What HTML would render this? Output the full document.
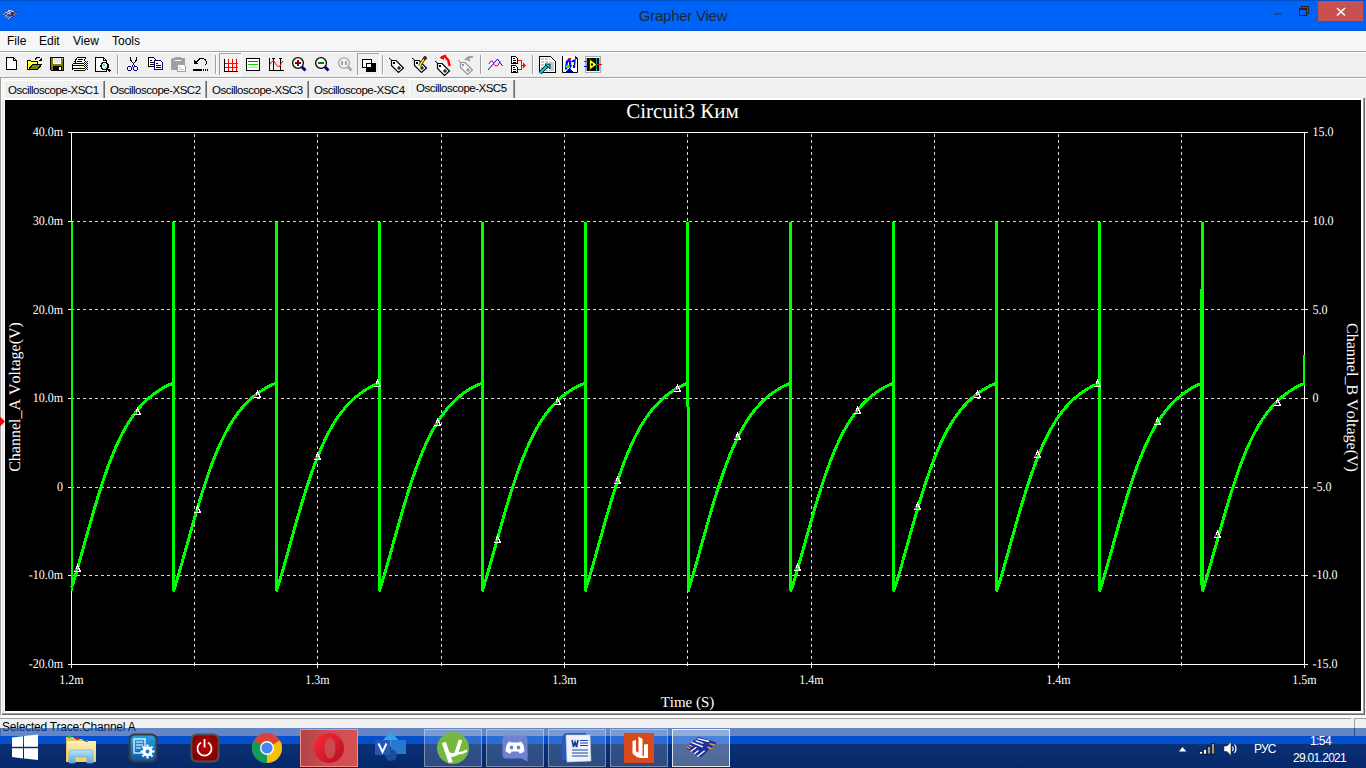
<!DOCTYPE html>
<html><head><meta charset="utf-8">
<style>
html,body{margin:0;padding:0;width:1366px;height:768px;overflow:hidden;background:#f0f0f0;font-family:"Liberation Sans",sans-serif;}
.abs{position:absolute;}
#titlebar{left:0;top:0;width:1366px;height:31px;background:#0063f8;border-top:1px solid #0050c8;box-sizing:border-box;}
#tb-bottom{left:0;top:30px;width:1366px;height:1px;background:#0056de;}
#title{left:0;top:7px;width:1366px;text-align:center;font-size:15px;letter-spacing:-0.25px;color:#1e2830;line-height:17px;}
#menubar{left:0;top:31px;width:1366px;height:20px;background:#f5f6f7;}
.menu{position:absolute;top:3px;font-size:12px;color:#000;line-height:15px;}
#tool-top{left:0;top:51px;width:1366px;height:1px;background:#a0a0a0;}
#tool-top2{left:0;top:52px;width:1366px;height:1px;background:#fff;}
#toolbar{left:0;top:53px;width:1366px;height:24px;background:#f0f0f0;}
#tool-bot{left:0;top:77px;width:1366px;height:1px;background:#a0a0a0;}
#tool-bot2{left:0;top:78px;width:1366px;height:1px;background:#fff;}
.sep{position:absolute;top:55px;width:1px;height:19px;background:#a0a0a0;border-right:1px solid #fff;}
.tab{position:absolute;font-size:11.5px;letter-spacing:-0.5px;color:#000;line-height:14px;}
.tsep{position:absolute;top:81px;width:1px;height:17px;background:#696969;border-left:1px solid #a0a0a0;}
#chart{left:5px;top:100px;width:1356px;height:611px;background:#000;}
.tbtn{position:absolute;top:729px;width:56px;height:37px;border:1px solid rgba(255,255,255,0.45);background:rgba(255,255,255,0.12);}
.tray{position:absolute;color:#fff;font-size:12px;line-height:14px;}
</style></head><body>
<!-- title bar -->
<div id="titlebar" class="abs"></div>
<div id="tb-bottom" class="abs"></div>
<svg class="abs" style="left:0;top:0" width="24" height="26" viewBox="0 0 24 26"><g transform="translate(-340.55,-359.2) scale(0.5)">
<path d="M685.1,747.6 L698.4,737.1 L716.7,742.5 L700.7,757.4 Z" fill="#1a2a90"/>
<path d="M697.5,738.6 L709,741.5 M695.6,740.7 L703.4,743.5 M691.5,742.4 L702.8,746.9 M690.6,751.5 L696.4,747.2 M694.2,753.7 L698.5,750.6 M697.4,756.4 L704.6,750.8" stroke="#f0f4ff" stroke-width="2"/>
<path d="M688.6,745 L692.5,746.6 M686.3,746.5 L690,748.7 M709.5,743.6 L714.5,745 M707.5,747 L711.5,748.8" stroke="#f8a818" stroke-width="2"/>
</g></svg>
<div id="title" class="abs">Grapher View</div>
<div class="abs" style="left:1274px;top:13px;width:8px;height:2px;background:#1e4a8c"></div>
<svg class="abs" style="left:1299px;top:6px" width="11" height="11" viewBox="0 0 11 11">
  <path d="M2.5,2.5 V0.5 H9.5 V7.5 H8" fill="none" stroke="#2a2018" stroke-width="1"/>
  <rect x="0.5" y="2.5" width="7" height="7" fill="none" stroke="#2a2018" stroke-width="1"/>
  <rect x="0" y="2" width="8" height="2" fill="#2a2018"/>
</svg>
<div class="abs" style="left:1318px;top:1px;width:45px;height:20px;background:#c75050"></div>
<svg class="abs" style="left:1336px;top:7px" width="10" height="10" viewBox="0 0 10 10">
  <path d="M1,1 L9,8.5 M9,1 L1,8.5" stroke="#fff" stroke-width="1.6"/>
</svg>

<!-- menu -->
<div id="menubar" class="abs">
  <span class="menu" style="left:7px">File</span>
  <span class="menu" style="left:39px">Edit</span>
  <span class="menu" style="left:73px">View</span>
  <span class="menu" style="left:112px">Tools</span>
</div>
<div id="tool-top" class="abs"></div>
<div id="tool-top2" class="abs"></div>
<div id="toolbar" class="abs"></div>
<div id="tool-bot" class="abs"></div>
<div id="tool-bot2" class="abs"></div>
<!--TOOLBAR-->
<svg class="abs" style="left:0;top:52px" width="610" height="26" viewBox="0 52 610 26">
<defs>
<pattern id="dith" width="2" height="2" patternUnits="userSpaceOnUse"><rect width="2" height="2" fill="#fff"/><rect width="1" height="1" fill="#e6e6e6"/><rect x="1" y="1" width="1" height="1" fill="#e6e6e6"/></pattern>
<pattern id="pdith" width="2" height="2" patternUnits="userSpaceOnUse"><rect width="2" height="2" fill="#fff"/><rect width="1" height="1" fill="#000"/><rect x="1" y="1" width="1" height="1" fill="#000"/></pattern>
<pattern id="ydith" width="2" height="2" patternUnits="userSpaceOnUse"><rect width="2" height="2" fill="#fff"/><rect width="1" height="1" fill="#ffff00"/><rect x="1" y="1" width="1" height="1" fill="#ffff00"/></pattern>
</defs>
<g shape-rendering="crispEdges">
<!-- separators -->
<rect x="117" y="55" width="1" height="19" fill="#a0a0a0"/><rect x="118" y="55" width="1" height="19" fill="#fff"/>
<rect x="215" y="55" width="1" height="19" fill="#a0a0a0"/><rect x="216" y="55" width="1" height="19" fill="#fff"/>
<rect x="382" y="55" width="1" height="19" fill="#a0a0a0"/><rect x="383" y="55" width="1" height="19" fill="#fff"/>
<rect x="480" y="55" width="1" height="19" fill="#a0a0a0"/><rect x="481" y="55" width="1" height="19" fill="#fff"/>
<rect x="532" y="55" width="1" height="19" fill="#a0a0a0"/><rect x="533" y="55" width="1" height="19" fill="#fff"/>
<!-- pressed buttons -->
<rect x="219" y="53" width="23" height="23" fill="#fff"/><rect x="220" y="54" width="21" height="21" fill="url(#dith)"/>
<rect x="219" y="53" width="22" height="1" fill="#a0a0a0"/><rect x="219" y="53" width="1" height="22" fill="#a0a0a0"/>
<rect x="357" y="53" width="23" height="23" fill="#fff"/><rect x="358" y="54" width="21" height="21" fill="url(#dith)"/>
<rect x="357" y="53" width="22" height="1" fill="#a0a0a0"/><rect x="357" y="53" width="1" height="22" fill="#a0a0a0"/>

<!-- 1 new doc -->
<path d="M6.5,57.5 H13.5 L16.5,60.5 V69.5 H6.5 Z" fill="#fff" stroke="#000"/>
<path d="M13.5,57.5 V60.5 H16.5" fill="none" stroke="#000"/>
<!-- 2 open folder -->
<path d="M27.5,69.5 V60.5 H30.5 L31.5,61.5 H37.5 V64.5" fill="url(#ydith)" stroke="#000"/>
<path d="M28.5,69.5 L32.5,64.5 H41.5 L37.5,69.5 Z" fill="#808000" stroke="#000"/>
<rect x="28" y="69" width="10" height="1" fill="#000"/>
<path d="M35,59.5 Q37.5,56 40.5,58.5" fill="none" stroke="#000" stroke-width="1.1"/>
<path d="M38.5,60.5 H42 V57 Z" fill="#000"/>
<!-- 3 save -->
<path d="M50,57 H64 V71 H51 L50,70 Z" fill="#000"/>
<rect x="51" y="58" width="12" height="12" fill="#808000"/>
<rect x="53" y="58" width="8" height="6" fill="#fff"/><rect x="54" y="58" width="6" height="5" fill="#e8e8e8"/>
<rect x="53" y="66" width="9" height="4" fill="#000"/><rect x="59" y="67" width="2" height="3" fill="#fff"/>
<rect x="62" y="58" width="1" height="1" fill="#fff"/>
<!-- 4 print -->
<rect x="77" y="57" width="9" height="1" fill="#000"/>
<path d="M76.5,58 L74.5,62.5" stroke="#000"/>
<rect x="76" y="58" width="9" height="5" fill="#fff"/><rect x="77" y="57" width="9" height="1" fill="#000"/><rect x="85" y="57" width="1" height="2" fill="#000"/>
<rect x="76" y="58" width="1" height="2" fill="#000"/><rect x="75" y="60" width="1" height="3" fill="#000"/>
<rect x="78" y="59" width="5" height="1" fill="#000"/><rect x="77" y="61" width="5" height="1" fill="#000"/>
<rect x="84" y="59" width="1" height="4" fill="#000"/>
<rect x="73" y="63" width="12" height="1" fill="#000"/>
<rect x="72" y="64" width="1" height="6" fill="#000"/>
<rect x="73" y="64" width="11" height="1" fill="#fff"/>
<rect x="73" y="65" width="12" height="1" fill="#000"/>
<rect x="73" y="66" width="11" height="2" fill="#fff"/><rect x="79" y="66" width="3" height="2" fill="#ffff00"/>
<rect x="73" y="68" width="12" height="1" fill="#000"/>
<rect x="74" y="69" width="10" height="1" fill="#fff"/>
<rect x="74" y="70" width="11" height="1" fill="#000"/>
<rect x="84" y="61" width="4" height="9" fill="url(#pdith)"/>
<!-- 5 preview -->
<path d="M95.5,57.5 H103.5 L106.5,60.5 V71.5 H95.5 Z" fill="#fff" stroke="#000"/>
<path d="M103.5,57.5 V60.5 H106.5" fill="none" stroke="#000"/>
<circle cx="104.6" cy="66" r="3.6" fill="#f4eeee" stroke="#000" stroke-width="1.3"/>
<rect x="103" y="64" width="2" height="2" fill="#00f0f0"/><rect x="105" y="67" width="2" height="1" fill="#00f0f0"/>
<path d="M107.3,68.8 L110.5,71.5" stroke="#000" stroke-width="2"/>
<!-- 6 cut -->
<path d="M130.5,57 V60 L134,64.5 M136.5,57 V60 L133,64.5" fill="none" stroke="#000"/>
<ellipse cx="129.5" cy="68.5" rx="1.8" ry="2.3" fill="none" stroke="#000080" stroke-width="1.1"/>
<ellipse cx="135.5" cy="68.5" rx="1.8" ry="2.3" fill="none" stroke="#000080" stroke-width="1.1"/>
<rect x="132" y="65" width="1" height="2" fill="#000080"/><rect x="134" y="65" width="1" height="2" fill="#000080"/>
<!-- 7 copy -->
<path d="M148.5,57.5 H153.5 L155.5,59.5 V66.5 H148.5 Z" fill="#fff" stroke="#000"/>
<rect x="150" y="60" width="2" height="1" fill="#000"/><rect x="150" y="62" width="4" height="1" fill="#000"/><rect x="150" y="64" width="4" height="1" fill="#000"/>
<path d="M154.5,60.5 H160.5 L162.5,62.5 V69.5 H154.5 Z" fill="#fff" stroke="#000080"/>
<rect x="156" y="63" width="2" height="1" fill="#000"/><rect x="156" y="65" width="5" height="1" fill="#000"/><rect x="156" y="67" width="5" height="1" fill="#000"/>
<!-- 8 paste disabled -->
<rect x="171" y="58" width="14" height="12" rx="2" fill="#a0a0a0"/>
<rect x="175" y="57" width="6" height="2" fill="#a0a0a0"/>
<rect x="175" y="60" width="6" height="1" fill="#fff"/>
<path d="M177.5,64.5 H183.5 L185.5,66.5 V71.5 H177.5 Z" fill="#fff" stroke="#a0a0a0"/>
<rect x="179" y="67" width="2" height="1" fill="#c0c0c0"/><rect x="179" y="69" width="5" height="1" fill="#c0c0c0"/>
<!-- 9 undo -->
<path d="M196,62.5 Q200,57 204,59 Q207.5,61 206,64 L204.5,65.5" fill="none" stroke="#000" stroke-width="1.2"/>
<path d="M194,59.5 V64 H198.5 Z" fill="#000"/>
<rect x="193" y="69" width="9" height="2" fill="#000"/><rect x="203" y="69" width="1" height="2" fill="#000"/><rect x="205" y="69" width="1" height="2" fill="#000"/><rect x="207" y="69" width="1" height="2" fill="#000"/>
<!-- 10 grid -->
<rect x="228" y="59" width="1" height="12" fill="#f00"/><rect x="232" y="59" width="1" height="12" fill="#f00"/><rect x="236" y="59" width="1" height="12" fill="#f00"/>
<rect x="225" y="63" width="13" height="1" fill="#f00"/><rect x="225" y="67" width="13" height="1" fill="#f00"/>
<rect x="224" y="59" width="1" height="13" fill="#000"/><rect x="224" y="71" width="14" height="1" fill="#000"/>
<!-- 11 legend -->
<rect x="246" y="58" width="14" height="13" fill="#000"/><rect x="247" y="59" width="12" height="11" fill="#fff"/>
<rect x="248" y="61" width="10" height="1" fill="#f00"/><rect x="248" y="64" width="10" height="1" fill="#00e000"/><rect x="248" y="67" width="10" height="1" fill="#f0e000"/>
<!-- 12 cursors -->
<rect x="269" y="58" width="1" height="13" fill="#000"/><rect x="273" y="58" width="1" height="13" fill="#000"/><rect x="280" y="58" width="1" height="13" fill="#000"/>
<rect x="269" y="70" width="15" height="1" fill="#000"/>
<rect x="272" y="58" width="3" height="1" fill="#000"/><rect x="279" y="58" width="3" height="1" fill="#000"/>
</g>
<path d="M270,64.5 Q272,60 274,61 Q277,68 280,66 Q281,63 283,61" fill="none" stroke="#f00" stroke-width="1"/>
<!-- 13 zoom in -->
<circle cx="298" cy="63" r="5.4" fill="#fff" stroke="#000" stroke-width="1.3"/>
<rect x="297" y="60" width="2" height="6" fill="#800000"/><rect x="295" y="62" width="6" height="2" fill="#800000"/>
<path d="M302,67 L305.5,70.5" stroke="#000080" stroke-width="3"/>
<!-- 14 zoom out -->
<circle cx="321" cy="63" r="5.4" fill="#fff" stroke="#000" stroke-width="1.3"/>
<rect x="318" y="62" width="6" height="2" fill="#008000"/>
<path d="M325,67 L328.5,70.5" stroke="#000080" stroke-width="3"/>
<!-- 15 zoom disabled -->
<circle cx="344" cy="63" r="5.4" fill="none" stroke="#a8a8a8" stroke-width="1.3"/>
<rect x="341" y="61" width="2" height="4" fill="#a8a8a8"/><rect x="345" y="61" width="2" height="4" fill="#a8a8a8"/>
<path d="M348,67 L351.5,70.5" stroke="#a8a8a8" stroke-width="3"/>
<g shape-rendering="crispEdges">
<!-- 16 overlap -->
<rect x="362" y="59" width="10" height="9" fill="#000"/><rect x="363" y="60" width="8" height="7" fill="#fff"/>
<rect x="366" y="63" width="10" height="9" fill="#000"/><rect x="367" y="64" width="4" height="3" fill="#fff"/>
</g>
<!-- 17-20 tags -->
<g id="tag">
<path d="M389,58 L392,60.5" stroke="#000"/>
<path d="M391.5,60.5 H396 L403.5,68 L398.5,72.5 L391.5,65.5 Z" fill="#fff" stroke="#000" stroke-width="1.2"/>
<rect x="393" y="62" width="2" height="2" fill="#000"/>
<path d="M397,68 L399,66 L401,68 L399,70 Z" fill="#000"/><rect x="398.5" y="67.5" width="1" height="1" fill="#aaa"/>
</g>
<use href="#tag" x="23" y="0"/>
<path d="M419.5,66 L424,59" stroke="#000" stroke-width="3"/><path d="M419.5,66 L424,59" stroke="#ffff00" stroke-width="1.6"/>
<circle cx="425" cy="58" r="1.5" fill="#f00" stroke="#000" stroke-width="0.8"/>
<use href="#tag" x="46" y="3"/>
<path d="M441,58 L445,56 L446.5,58.5 Q449,60 449,64 L450,66" fill="none" stroke="#f00" stroke-width="2.4"/>
<path d="M439.5,57.5 L444,55 L444,60 Z" fill="#f00"/>
<g opacity="0.38">
<use href="#tag" x="69" y="2"/>
</g>
<path d="M465,60 L469,57 H473 M466,58 L470,61" stroke="#a0a0a0" stroke-width="2"/>
<!-- 21 curve icon -->
<path d="M488,70 L497.5,59 L502.5,66" fill="none" stroke="#0000ff" stroke-width="1"/>
<path d="M489,64 Q490,60 492.5,61 Q494,66 496,66 Q499,66 500,61" fill="none" stroke="#f00" stroke-width="1"/>
<!-- 22 export -->
<g shape-rendering="crispEdges">
<path d="M511.5,56.5 H515.5 L517.5,58.5 V63.5 H511.5 Z" fill="#fff" stroke="#000"/>
<rect x="513" y="58" width="2" height="1" fill="#000"/><rect x="513" y="60" width="3" height="1" fill="#000"/><rect x="513" y="62" width="3" height="1" fill="#000"/>
<path d="M511.5,65.5 H515.5 L517.5,67.5 V72.5 H511.5 Z" fill="#fff" stroke="#000"/>
<rect x="513" y="67" width="2" height="1" fill="#000"/><rect x="513" y="69" width="3" height="1" fill="#000"/><rect x="513" y="71" width="3" height="1" fill="#000"/>
<path d="M518,60.5 H521.5 V69.5 H518 M521.5,65.5 H523" fill="none" stroke="#f00"/>
</g>
<path d="M523,62.5 L526,65.5 L523,68.5 Z" fill="#f00"/>
<!-- 23 grid doc arrow -->
<g shape-rendering="crispEdges">
<path d="M539.5,56.5 H550.5 L555.5,61.5 V72.5 H539.5 Z" fill="#fff" stroke="#000"/>
<rect x="541" y="58" width="9" height="13" fill="#c8c8c8"/>
<rect x="541" y="60" width="13" height="1" fill="#fff"/><rect x="541" y="63" width="13" height="1" fill="#fff"/><rect x="541" y="66" width="13" height="1" fill="#fff"/><rect x="541" y="69" width="13" height="1" fill="#fff"/>
<rect x="544" y="58" width="1" height="13" fill="#fff"/><rect x="548" y="58" width="1" height="13" fill="#fff"/>
<rect x="550" y="62" width="4" height="9" fill="#c8c8c8"/>
</g>
<path d="M540,73 L548,65" stroke="#000" stroke-width="3.5"/>
<path d="M540,73 L548,65" stroke="#00e0f0" stroke-width="2"/>
<path d="M545,64 H550 V69 Z" fill="#00e0f0" stroke="#000" stroke-width="0.8"/>
<!-- 24 M doc -->
<path d="M562.5,56 V72.5 H577.5 V58.5 L575.5,56.5 V58.5 H577.5" fill="#fff" stroke="#000"/>
<rect x="563" y="56" width="12" height="16" fill="#fff"/>
</g>
<path d="M566,69.5 L567,61 M567,61 L569.5,60 L570.5,66 L572.5,61.5 L574.5,60.5 L574,68" fill="none" stroke="#0000ff" stroke-width="2.2"/>
<g shape-rendering="crispEdges">
<path d="M565,73 L569.5,67.5 L574,73 Z" fill="#000080"/>
<rect x="568" y="58" width="3" height="2" fill="#f00"/><rect x="571" y="62" width="3" height="3" fill="#ffff00"/><rect x="566" y="65" width="3" height="3" fill="#00ff00"/>
<!-- 25 labview -->
<rect x="585" y="56" width="16" height="17" fill="#a8a8a8"/>
<rect x="586" y="57" width="14" height="1" fill="#fff"/><rect x="586" y="71" width="14" height="1" fill="#fff"/>
<rect x="587" y="58" width="12" height="13" fill="#000"/>
<rect x="589" y="58" width="1" height="13" fill="#00a0a0"/><rect x="596" y="58" width="1" height="13" fill="#00a0a0"/>
<rect x="584" y="61" width="4" height="1" fill="#f00"/><rect x="584" y="66" width="4" height="1" fill="#0000ff"/><rect x="597" y="64" width="5" height="1" fill="#f00"/>
</g>
<path d="M589.5,59 V70 L597,64.5 Z" fill="#ffff00" stroke="#000" stroke-width="0.8"/>
<rect x="591" y="63.5" width="2" height="2" fill="#000"/>
</svg>


<!-- tabs -->
<div class="abs" style="left:0;top:79px;width:1366px;height:21px;background:#f0f0f0"></div>
<div class="abs" style="left:3px;top:80px;width:1px;height:18px;background:#fff"></div>
<div class="abs" style="left:3px;top:80px;width:101px;height:1px;background:#fff"></div>
<span class="tab" style="left:8px;top:83px">Oscilloscope-XSC1</span>
<div class="tsep" style="left:103px"></div>
<span class="tab" style="left:110px;top:83px">Oscilloscope-XSC2</span>
<div class="tsep" style="left:205px"></div>
<span class="tab" style="left:212px;top:83px">Oscilloscope-XSC3</span>
<div class="tsep" style="left:307px"></div>
<span class="tab" style="left:314px;top:83px">Oscilloscope-XSC4</span>
<div class="abs" style="left:409px;top:79px;width:1px;height:20px;background:#fff"></div>
<div class="abs" style="left:409px;top:79px;width:105px;height:1px;background:#fff"></div>
<div class="abs" style="left:513px;top:80px;width:1px;height:19px;background:#a0a0a0"></div>
<div class="abs" style="left:514px;top:80px;width:1px;height:19px;background:#696969"></div>
<span class="tab" style="left:416px;top:81px">Oscilloscope-XSC5</span>

<!-- chart frame -->
<div class="abs" style="left:0;top:77px;width:1px;height:660px;background:#a0a0a0"></div>
<div class="abs" style="left:1px;top:78px;width:1px;height:659px;background:#fff"></div>
<div class="abs" style="left:2px;top:98px;width:1363px;height:1px;background:#fff"></div>
<div class="abs" style="left:2px;top:99px;width:1362px;height:615px;background:#e8e8e8"></div>
<div class="abs" style="left:4px;top:99px;width:1359px;height:614px;background:#fff"></div>
<div class="abs" style="left:1363px;top:98px;width:1px;height:616px;background:#a0a0a0"></div>
<div class="abs" style="left:1364px;top:98px;width:1px;height:617px;background:#696969"></div>
<div class="abs" style="left:2px;top:713px;width:1362px;height:1px;background:#a0a0a0"></div>
<div class="abs" style="left:2px;top:714px;width:1363px;height:1px;background:#696969"></div>
<div id="chart" class="abs"></div>
<svg class="abs" style="left:0;top:0;font-kerning:none;text-rendering:geometricPrecision" width="1366" height="768" font-family='"Liberation Serif", serif'><line x1="72" y1="221.5" x2="1304" y2="221.5" stroke="#d8d8d8" stroke-width="1" stroke-dasharray="3 3" stroke-dashoffset="1"/><line x1="72" y1="309.5" x2="1304" y2="309.5" stroke="#d8d8d8" stroke-width="1" stroke-dasharray="3 3" stroke-dashoffset="1"/><line x1="72" y1="398.5" x2="1304" y2="398.5" stroke="#d8d8d8" stroke-width="1" stroke-dasharray="3 3" stroke-dashoffset="1"/><line x1="72" y1="487.5" x2="1304" y2="487.5" stroke="#d8d8d8" stroke-width="1" stroke-dasharray="3 3" stroke-dashoffset="1"/><line x1="72" y1="575.5" x2="1304" y2="575.5" stroke="#d8d8d8" stroke-width="1" stroke-dasharray="3 3" stroke-dashoffset="1"/><line x1="194.5" y1="134" x2="194.5" y2="664" stroke="#d8d8d8" stroke-width="1" stroke-dasharray="3 3"/><line x1="317.5" y1="134" x2="317.5" y2="664" stroke="#d8d8d8" stroke-width="1" stroke-dasharray="3 3"/><line x1="441.5" y1="134" x2="441.5" y2="664" stroke="#d8d8d8" stroke-width="1" stroke-dasharray="3 3"/><line x1="564.5" y1="134" x2="564.5" y2="664" stroke="#d8d8d8" stroke-width="1" stroke-dasharray="3 3"/><line x1="687.5" y1="134" x2="687.5" y2="664" stroke="#d8d8d8" stroke-width="1" stroke-dasharray="3 3"/><line x1="811.5" y1="134" x2="811.5" y2="664" stroke="#d8d8d8" stroke-width="1" stroke-dasharray="3 3"/><line x1="934.5" y1="134" x2="934.5" y2="664" stroke="#d8d8d8" stroke-width="1" stroke-dasharray="3 3"/><line x1="1058.5" y1="134" x2="1058.5" y2="664" stroke="#d8d8d8" stroke-width="1" stroke-dasharray="3 3"/><line x1="1181.5" y1="134" x2="1181.5" y2="664" stroke="#d8d8d8" stroke-width="1" stroke-dasharray="3 3"/><rect x="71" y="132" width="1234" height="1" fill="#fff"/><rect x="71" y="664" width="1234" height="1" fill="#fff"/><rect x="71" y="132" width="1" height="533" fill="#fff"/><rect x="1304" y="132" width="1" height="533" fill="#fff"/><rect x="68" y="132" width="3" height="1" fill="#fff"/><rect x="1305" y="132" width="3" height="1" fill="#fff"/><rect x="68" y="221" width="3" height="1" fill="#fff"/><rect x="1305" y="221" width="3" height="1" fill="#fff"/><rect x="68" y="309" width="3" height="1" fill="#fff"/><rect x="1305" y="309" width="3" height="1" fill="#fff"/><rect x="68" y="398" width="3" height="1" fill="#fff"/><rect x="1305" y="398" width="3" height="1" fill="#fff"/><rect x="68" y="487" width="3" height="1" fill="#fff"/><rect x="1305" y="487" width="3" height="1" fill="#fff"/><rect x="68" y="575" width="3" height="1" fill="#fff"/><rect x="1305" y="575" width="3" height="1" fill="#fff"/><rect x="68" y="664" width="3" height="1" fill="#fff"/><rect x="1305" y="664" width="3" height="1" fill="#fff"/><rect x="71" y="665" width="1" height="3" fill="#fff"/><rect x="194" y="665" width="1" height="1" fill="#fff"/><rect x="317" y="665" width="1" height="3" fill="#fff"/><rect x="441" y="665" width="1" height="1" fill="#fff"/><rect x="564" y="665" width="1" height="3" fill="#fff"/><rect x="687" y="665" width="1" height="1" fill="#fff"/><rect x="811" y="665" width="1" height="3" fill="#fff"/><rect x="934" y="665" width="1" height="1" fill="#fff"/><rect x="1058" y="665" width="1" height="3" fill="#fff"/><rect x="1181" y="665" width="1" height="1" fill="#fff"/><rect x="1304" y="665" width="1" height="3" fill="#fff"/><path d="M71.5,587.5 L73.1,583.17 L74.1,579.89 L75.1,576.56 L76.1,573.18 L77.1,569.75 L78.1,566.28 L79.1,562.77 L80.1,559.24 L81.1,555.69 L82.1,552.12 L83.1,548.54 L84.1,544.96 L85.1,541.37 L86.1,537.79 L87.1,534.21 L88.1,530.65 L89.1,527.1 L90.1,523.57 L91.1,520.07 L92.1,516.59 L93.1,513.14 L94.1,509.73 L95.1,506.34 L96.1,503 L97.1,499.7 L98.1,496.43 L99.1,493.22 L100.1,490.05 L101.1,486.92 L102.1,483.85 L103.1,480.82 L104.1,477.85 L105.1,474.93 L106.1,472.07 L107.1,469.26 L108.1,466.51 L109.1,463.81 L110.1,461.17 L111.1,458.59 L112.1,456.06 L113.1,453.59 L114.1,451.18 L115.1,448.83 L116.1,446.53 L117.1,444.29 L118.1,442.11 L119.1,439.98 L120.1,437.91 L121.1,435.89 L122.1,433.93 L123.1,432.02 L124.1,430.16 L125.1,428.36 L126.1,426.61 L127.1,424.9 L128.1,423.25 L129.1,421.64 L130.1,420.08 L131.1,418.57 L132.1,417.1 L133.1,415.68 L134.1,414.3 L135.1,412.96 L136.1,411.66 L137.1,410.4 L138.1,409.17 L139.1,407.98 L140.1,406.83 L141.1,405.72 L142.1,404.63 L143.1,403.58 L144.1,402.56 L145.1,401.57 L146.1,400.61 L147.1,399.67 L148.1,398.76 L149.1,397.88 L150.1,397.02 L151.1,396.19 L152.1,395.38 L153.1,394.59 L154.1,393.83 L155.1,393.09 L156.1,392.37 L157.1,391.67 L158.1,390.99 L159.1,390.33 L160.1,389.69 L161.1,389.07 L162.1,388.47 L163.1,387.89 L164.1,387.33 L165.1,386.8 L166.1,386.28 L167.1,385.79 L168.1,385.32 L169.1,384.87 L170.1,384.45 L171.1,384.06 L172.1,383.7 L173.1,383.36 L173.5,383.23 M174,589.5 L175,586.37 L176,583.17 L177,579.89 L178,576.56 L179,573.18 L180,569.75 L181,566.28 L182,562.77 L183,559.24 L184,555.69 L185,552.12 L186,548.54 L187,544.96 L188,541.37 L189,537.79 L190,534.21 L191,530.65 L192,527.1 L193,523.57 L194,520.07 L195,516.59 L196,513.14 L197,509.73 L198,506.34 L199,503 L200,499.7 L201,496.43 L202,493.22 L203,490.05 L204,486.92 L205,483.85 L206,480.82 L207,477.85 L208,474.93 L209,472.07 L210,469.26 L211,466.51 L212,463.81 L213,461.17 L214,458.59 L215,456.06 L216,453.59 L217,451.18 L218,448.83 L219,446.53 L220,444.29 L221,442.11 L222,439.98 L223,437.91 L224,435.89 L225,433.93 L226,432.02 L227,430.16 L228,428.36 L229,426.61 L230,424.9 L231,423.25 L232,421.64 L233,420.08 L234,418.57 L235,417.1 L236,415.68 L237,414.3 L238,412.96 L239,411.66 L240,410.4 L241,409.17 L242,407.98 L243,406.83 L244,405.72 L245,404.63 L246,403.58 L247,402.56 L248,401.57 L249,400.61 L250,399.67 L251,398.76 L252,397.88 L253,397.02 L254,396.19 L255,395.38 L256,394.59 L257,393.83 L258,393.09 L259,392.37 L260,391.67 L261,390.99 L262,390.33 L263,389.69 L264,389.07 L265,388.47 L266,387.89 L267,387.33 L268,386.8 L269,386.28 L270,385.79 L271,385.32 L272,384.87 L273,384.45 L274,384.06 L275,383.7 L276,383.36 L276.4,383.23 M276.9,589.5 L277.9,586.37 L278.9,583.17 L279.9,579.89 L280.9,576.56 L281.9,573.18 L282.9,569.75 L283.9,566.28 L284.9,562.77 L285.9,559.24 L286.9,555.69 L287.9,552.12 L288.9,548.54 L289.9,544.96 L290.9,541.37 L291.9,537.79 L292.9,534.21 L293.9,530.65 L294.9,527.1 L295.9,523.57 L296.9,520.07 L297.9,516.59 L298.9,513.14 L299.9,509.73 L300.9,506.34 L301.9,503 L302.9,499.7 L303.9,496.43 L304.9,493.22 L305.9,490.05 L306.9,486.92 L307.9,483.85 L308.9,480.82 L309.9,477.85 L310.9,474.93 L311.9,472.07 L312.9,469.26 L313.9,466.51 L314.9,463.81 L315.9,461.17 L316.9,458.59 L317.9,456.06 L318.9,453.59 L319.9,451.18 L320.9,448.83 L321.9,446.53 L322.9,444.29 L323.9,442.11 L324.9,439.98 L325.9,437.91 L326.9,435.89 L327.9,433.93 L328.9,432.02 L329.9,430.16 L330.9,428.36 L331.9,426.61 L332.9,424.9 L333.9,423.25 L334.9,421.64 L335.9,420.08 L336.9,418.57 L337.9,417.1 L338.9,415.68 L339.9,414.3 L340.9,412.96 L341.9,411.66 L342.9,410.4 L343.9,409.17 L344.9,407.98 L345.9,406.83 L346.9,405.72 L347.9,404.63 L348.9,403.58 L349.9,402.56 L350.9,401.57 L351.9,400.61 L352.9,399.67 L353.9,398.76 L354.9,397.88 L355.9,397.02 L356.9,396.19 L357.9,395.38 L358.9,394.59 L359.9,393.83 L360.9,393.09 L361.9,392.37 L362.9,391.67 L363.9,390.99 L364.9,390.33 L365.9,389.69 L366.9,389.07 L367.9,388.47 L368.9,387.89 L369.9,387.33 L370.9,386.8 L371.9,386.28 L372.9,385.79 L373.9,385.32 L374.9,384.87 L375.9,384.45 L376.9,384.06 L377.9,383.7 L378.9,383.36 L379.3,383.23 M379.8,589.5 L380.8,586.37 L381.8,583.17 L382.8,579.89 L383.8,576.56 L384.8,573.18 L385.8,569.75 L386.8,566.28 L387.8,562.77 L388.8,559.24 L389.8,555.69 L390.8,552.12 L391.8,548.54 L392.8,544.96 L393.8,541.37 L394.8,537.79 L395.8,534.21 L396.8,530.65 L397.8,527.1 L398.8,523.57 L399.8,520.07 L400.8,516.59 L401.8,513.14 L402.8,509.73 L403.8,506.34 L404.8,503 L405.8,499.7 L406.8,496.43 L407.8,493.22 L408.8,490.05 L409.8,486.92 L410.8,483.85 L411.8,480.82 L412.8,477.85 L413.8,474.93 L414.8,472.07 L415.8,469.26 L416.8,466.51 L417.8,463.81 L418.8,461.17 L419.8,458.59 L420.8,456.06 L421.8,453.59 L422.8,451.18 L423.8,448.83 L424.8,446.53 L425.8,444.29 L426.8,442.11 L427.8,439.98 L428.8,437.91 L429.8,435.89 L430.8,433.93 L431.8,432.02 L432.8,430.16 L433.8,428.36 L434.8,426.61 L435.8,424.9 L436.8,423.25 L437.8,421.64 L438.8,420.08 L439.8,418.57 L440.8,417.1 L441.8,415.68 L442.8,414.3 L443.8,412.96 L444.8,411.66 L445.8,410.4 L446.8,409.17 L447.8,407.98 L448.8,406.83 L449.8,405.72 L450.8,404.63 L451.8,403.58 L452.8,402.56 L453.8,401.57 L454.8,400.61 L455.8,399.67 L456.8,398.76 L457.8,397.88 L458.8,397.02 L459.8,396.19 L460.8,395.38 L461.8,394.59 L462.8,393.83 L463.8,393.09 L464.8,392.37 L465.8,391.67 L466.8,390.99 L467.8,390.33 L468.8,389.69 L469.8,389.07 L470.8,388.47 L471.8,387.89 L472.8,387.33 L473.8,386.8 L474.8,386.28 L475.8,385.79 L476.8,385.32 L477.8,384.87 L478.8,384.45 L479.8,384.06 L480.8,383.7 L481.8,383.36 L482.2,383.23 M482.7,589.5 L483.7,586.37 L484.7,583.17 L485.7,579.89 L486.7,576.56 L487.7,573.18 L488.7,569.75 L489.7,566.28 L490.7,562.77 L491.7,559.24 L492.7,555.69 L493.7,552.12 L494.7,548.54 L495.7,544.96 L496.7,541.37 L497.7,537.79 L498.7,534.21 L499.7,530.65 L500.7,527.1 L501.7,523.57 L502.7,520.07 L503.7,516.59 L504.7,513.14 L505.7,509.73 L506.7,506.34 L507.7,503 L508.7,499.7 L509.7,496.43 L510.7,493.22 L511.7,490.05 L512.7,486.92 L513.7,483.85 L514.7,480.82 L515.7,477.85 L516.7,474.93 L517.7,472.07 L518.7,469.26 L519.7,466.51 L520.7,463.81 L521.7,461.17 L522.7,458.59 L523.7,456.06 L524.7,453.59 L525.7,451.18 L526.7,448.83 L527.7,446.53 L528.7,444.29 L529.7,442.11 L530.7,439.98 L531.7,437.91 L532.7,435.89 L533.7,433.93 L534.7,432.02 L535.7,430.16 L536.7,428.36 L537.7,426.61 L538.7,424.9 L539.7,423.25 L540.7,421.64 L541.7,420.08 L542.7,418.57 L543.7,417.1 L544.7,415.68 L545.7,414.3 L546.7,412.96 L547.7,411.66 L548.7,410.4 L549.7,409.17 L550.7,407.98 L551.7,406.83 L552.7,405.72 L553.7,404.63 L554.7,403.58 L555.7,402.56 L556.7,401.57 L557.7,400.61 L558.7,399.67 L559.7,398.76 L560.7,397.88 L561.7,397.02 L562.7,396.19 L563.7,395.38 L564.7,394.59 L565.7,393.83 L566.7,393.09 L567.7,392.37 L568.7,391.67 L569.7,390.99 L570.7,390.33 L571.7,389.69 L572.7,389.07 L573.7,388.47 L574.7,387.89 L575.7,387.33 L576.7,386.8 L577.7,386.28 L578.7,385.79 L579.7,385.32 L580.7,384.87 L581.7,384.45 L582.7,384.06 L583.7,383.7 L584.7,383.36 L585.1,383.23 M585.6,589.5 L586.6,586.37 L587.6,583.17 L588.6,579.89 L589.6,576.56 L590.6,573.18 L591.6,569.75 L592.6,566.28 L593.6,562.77 L594.6,559.24 L595.6,555.69 L596.6,552.12 L597.6,548.54 L598.6,544.96 L599.6,541.37 L600.6,537.79 L601.6,534.21 L602.6,530.65 L603.6,527.1 L604.6,523.57 L605.6,520.07 L606.6,516.59 L607.6,513.14 L608.6,509.73 L609.6,506.34 L610.6,503 L611.6,499.7 L612.6,496.43 L613.6,493.22 L614.6,490.05 L615.6,486.92 L616.6,483.85 L617.6,480.82 L618.6,477.85 L619.6,474.93 L620.6,472.07 L621.6,469.26 L622.6,466.51 L623.6,463.81 L624.6,461.17 L625.6,458.59 L626.6,456.06 L627.6,453.59 L628.6,451.18 L629.6,448.83 L630.6,446.53 L631.6,444.29 L632.6,442.11 L633.6,439.98 L634.6,437.91 L635.6,435.89 L636.6,433.93 L637.6,432.02 L638.6,430.16 L639.6,428.36 L640.6,426.61 L641.6,424.9 L642.6,423.25 L643.6,421.64 L644.6,420.08 L645.6,418.57 L646.6,417.1 L647.6,415.68 L648.6,414.3 L649.6,412.96 L650.6,411.66 L651.6,410.4 L652.6,409.17 L653.6,407.98 L654.6,406.83 L655.6,405.72 L656.6,404.63 L657.6,403.58 L658.6,402.56 L659.6,401.57 L660.6,400.61 L661.6,399.67 L662.6,398.76 L663.6,397.88 L664.6,397.02 L665.6,396.19 L666.6,395.38 L667.6,394.59 L668.6,393.83 L669.6,393.09 L670.6,392.37 L671.6,391.67 L672.6,390.99 L673.6,390.33 L674.6,389.69 L675.6,389.07 L676.6,388.47 L677.6,387.89 L678.6,387.33 L679.6,386.8 L680.6,386.28 L681.6,385.79 L682.6,385.32 L683.6,384.87 L684.6,384.45 L685.6,384.06 L686.6,383.7 L687.6,383.36 L688,383.23 M688.5,589.5 L689.5,586.37 L690.5,583.17 L691.5,579.89 L692.5,576.56 L693.5,573.18 L694.5,569.75 L695.5,566.28 L696.5,562.77 L697.5,559.24 L698.5,555.69 L699.5,552.12 L700.5,548.54 L701.5,544.96 L702.5,541.37 L703.5,537.79 L704.5,534.21 L705.5,530.65 L706.5,527.1 L707.5,523.57 L708.5,520.07 L709.5,516.59 L710.5,513.14 L711.5,509.73 L712.5,506.34 L713.5,503 L714.5,499.7 L715.5,496.43 L716.5,493.22 L717.5,490.05 L718.5,486.92 L719.5,483.85 L720.5,480.82 L721.5,477.85 L722.5,474.93 L723.5,472.07 L724.5,469.26 L725.5,466.51 L726.5,463.81 L727.5,461.17 L728.5,458.59 L729.5,456.06 L730.5,453.59 L731.5,451.18 L732.5,448.83 L733.5,446.53 L734.5,444.29 L735.5,442.11 L736.5,439.98 L737.5,437.91 L738.5,435.89 L739.5,433.93 L740.5,432.02 L741.5,430.16 L742.5,428.36 L743.5,426.61 L744.5,424.9 L745.5,423.25 L746.5,421.64 L747.5,420.08 L748.5,418.57 L749.5,417.1 L750.5,415.68 L751.5,414.3 L752.5,412.96 L753.5,411.66 L754.5,410.4 L755.5,409.17 L756.5,407.98 L757.5,406.83 L758.5,405.72 L759.5,404.63 L760.5,403.58 L761.5,402.56 L762.5,401.57 L763.5,400.61 L764.5,399.67 L765.5,398.76 L766.5,397.88 L767.5,397.02 L768.5,396.19 L769.5,395.38 L770.5,394.59 L771.5,393.83 L772.5,393.09 L773.5,392.37 L774.5,391.67 L775.5,390.99 L776.5,390.33 L777.5,389.69 L778.5,389.07 L779.5,388.47 L780.5,387.89 L781.5,387.33 L782.5,386.8 L783.5,386.28 L784.5,385.79 L785.5,385.32 L786.5,384.87 L787.5,384.45 L788.5,384.06 L789.5,383.7 L790.5,383.36 L790.9,383.23 M791.4,589.5 L792.4,586.37 L793.4,583.17 L794.4,579.89 L795.4,576.56 L796.4,573.18 L797.4,569.75 L798.4,566.28 L799.4,562.77 L800.4,559.24 L801.4,555.69 L802.4,552.12 L803.4,548.54 L804.4,544.96 L805.4,541.37 L806.4,537.79 L807.4,534.21 L808.4,530.65 L809.4,527.1 L810.4,523.57 L811.4,520.07 L812.4,516.59 L813.4,513.14 L814.4,509.73 L815.4,506.34 L816.4,503 L817.4,499.7 L818.4,496.43 L819.4,493.22 L820.4,490.05 L821.4,486.92 L822.4,483.85 L823.4,480.82 L824.4,477.85 L825.4,474.93 L826.4,472.07 L827.4,469.26 L828.4,466.51 L829.4,463.81 L830.4,461.17 L831.4,458.59 L832.4,456.06 L833.4,453.59 L834.4,451.18 L835.4,448.83 L836.4,446.53 L837.4,444.29 L838.4,442.11 L839.4,439.98 L840.4,437.91 L841.4,435.89 L842.4,433.93 L843.4,432.02 L844.4,430.16 L845.4,428.36 L846.4,426.61 L847.4,424.9 L848.4,423.25 L849.4,421.64 L850.4,420.08 L851.4,418.57 L852.4,417.1 L853.4,415.68 L854.4,414.3 L855.4,412.96 L856.4,411.66 L857.4,410.4 L858.4,409.17 L859.4,407.98 L860.4,406.83 L861.4,405.72 L862.4,404.63 L863.4,403.58 L864.4,402.56 L865.4,401.57 L866.4,400.61 L867.4,399.67 L868.4,398.76 L869.4,397.88 L870.4,397.02 L871.4,396.19 L872.4,395.38 L873.4,394.59 L874.4,393.83 L875.4,393.09 L876.4,392.37 L877.4,391.67 L878.4,390.99 L879.4,390.33 L880.4,389.69 L881.4,389.07 L882.4,388.47 L883.4,387.89 L884.4,387.33 L885.4,386.8 L886.4,386.28 L887.4,385.79 L888.4,385.32 L889.4,384.87 L890.4,384.45 L891.4,384.06 L892.4,383.7 L893.4,383.36 L893.8,383.23 M894.3,589.5 L895.3,586.37 L896.3,583.17 L897.3,579.89 L898.3,576.56 L899.3,573.18 L900.3,569.75 L901.3,566.28 L902.3,562.77 L903.3,559.24 L904.3,555.69 L905.3,552.12 L906.3,548.54 L907.3,544.96 L908.3,541.37 L909.3,537.79 L910.3,534.21 L911.3,530.65 L912.3,527.1 L913.3,523.57 L914.3,520.07 L915.3,516.59 L916.3,513.14 L917.3,509.73 L918.3,506.34 L919.3,503 L920.3,499.7 L921.3,496.43 L922.3,493.22 L923.3,490.05 L924.3,486.92 L925.3,483.85 L926.3,480.82 L927.3,477.85 L928.3,474.93 L929.3,472.07 L930.3,469.26 L931.3,466.51 L932.3,463.81 L933.3,461.17 L934.3,458.59 L935.3,456.06 L936.3,453.59 L937.3,451.18 L938.3,448.83 L939.3,446.53 L940.3,444.29 L941.3,442.11 L942.3,439.98 L943.3,437.91 L944.3,435.89 L945.3,433.93 L946.3,432.02 L947.3,430.16 L948.3,428.36 L949.3,426.61 L950.3,424.9 L951.3,423.25 L952.3,421.64 L953.3,420.08 L954.3,418.57 L955.3,417.1 L956.3,415.68 L957.3,414.3 L958.3,412.96 L959.3,411.66 L960.3,410.4 L961.3,409.17 L962.3,407.98 L963.3,406.83 L964.3,405.72 L965.3,404.63 L966.3,403.58 L967.3,402.56 L968.3,401.57 L969.3,400.61 L970.3,399.67 L971.3,398.76 L972.3,397.88 L973.3,397.02 L974.3,396.19 L975.3,395.38 L976.3,394.59 L977.3,393.83 L978.3,393.09 L979.3,392.37 L980.3,391.67 L981.3,390.99 L982.3,390.33 L983.3,389.69 L984.3,389.07 L985.3,388.47 L986.3,387.89 L987.3,387.33 L988.3,386.8 L989.3,386.28 L990.3,385.79 L991.3,385.32 L992.3,384.87 L993.3,384.45 L994.3,384.06 L995.3,383.7 L996.3,383.36 L996.7,383.23 M997.2,589.5 L998.2,586.37 L999.2,583.17 L1000.2,579.89 L1001.2,576.56 L1002.2,573.18 L1003.2,569.75 L1004.2,566.28 L1005.2,562.77 L1006.2,559.24 L1007.2,555.69 L1008.2,552.12 L1009.2,548.54 L1010.2,544.96 L1011.2,541.37 L1012.2,537.79 L1013.2,534.21 L1014.2,530.65 L1015.2,527.1 L1016.2,523.57 L1017.2,520.07 L1018.2,516.59 L1019.2,513.14 L1020.2,509.73 L1021.2,506.34 L1022.2,503 L1023.2,499.7 L1024.2,496.43 L1025.2,493.22 L1026.2,490.05 L1027.2,486.92 L1028.2,483.85 L1029.2,480.82 L1030.2,477.85 L1031.2,474.93 L1032.2,472.07 L1033.2,469.26 L1034.2,466.51 L1035.2,463.81 L1036.2,461.17 L1037.2,458.59 L1038.2,456.06 L1039.2,453.59 L1040.2,451.18 L1041.2,448.83 L1042.2,446.53 L1043.2,444.29 L1044.2,442.11 L1045.2,439.98 L1046.2,437.91 L1047.2,435.89 L1048.2,433.93 L1049.2,432.02 L1050.2,430.16 L1051.2,428.36 L1052.2,426.61 L1053.2,424.9 L1054.2,423.25 L1055.2,421.64 L1056.2,420.08 L1057.2,418.57 L1058.2,417.1 L1059.2,415.68 L1060.2,414.3 L1061.2,412.96 L1062.2,411.66 L1063.2,410.4 L1064.2,409.17 L1065.2,407.98 L1066.2,406.83 L1067.2,405.72 L1068.2,404.63 L1069.2,403.58 L1070.2,402.56 L1071.2,401.57 L1072.2,400.61 L1073.2,399.67 L1074.2,398.76 L1075.2,397.88 L1076.2,397.02 L1077.2,396.19 L1078.2,395.38 L1079.2,394.59 L1080.2,393.83 L1081.2,393.09 L1082.2,392.37 L1083.2,391.67 L1084.2,390.99 L1085.2,390.33 L1086.2,389.69 L1087.2,389.07 L1088.2,388.47 L1089.2,387.89 L1090.2,387.33 L1091.2,386.8 L1092.2,386.28 L1093.2,385.79 L1094.2,385.32 L1095.2,384.87 L1096.2,384.45 L1097.2,384.06 L1098.2,383.7 L1099.2,383.36 L1099.6,383.23 M1100.1,589.5 L1101.1,586.37 L1102.1,583.17 L1103.1,579.89 L1104.1,576.56 L1105.1,573.18 L1106.1,569.75 L1107.1,566.28 L1108.1,562.77 L1109.1,559.24 L1110.1,555.69 L1111.1,552.12 L1112.1,548.54 L1113.1,544.96 L1114.1,541.37 L1115.1,537.79 L1116.1,534.21 L1117.1,530.65 L1118.1,527.1 L1119.1,523.57 L1120.1,520.07 L1121.1,516.59 L1122.1,513.14 L1123.1,509.73 L1124.1,506.34 L1125.1,503 L1126.1,499.7 L1127.1,496.43 L1128.1,493.22 L1129.1,490.05 L1130.1,486.92 L1131.1,483.85 L1132.1,480.82 L1133.1,477.85 L1134.1,474.93 L1135.1,472.07 L1136.1,469.26 L1137.1,466.51 L1138.1,463.81 L1139.1,461.17 L1140.1,458.59 L1141.1,456.06 L1142.1,453.59 L1143.1,451.18 L1144.1,448.83 L1145.1,446.53 L1146.1,444.29 L1147.1,442.11 L1148.1,439.98 L1149.1,437.91 L1150.1,435.89 L1151.1,433.93 L1152.1,432.02 L1153.1,430.16 L1154.1,428.36 L1155.1,426.61 L1156.1,424.9 L1157.1,423.25 L1158.1,421.64 L1159.1,420.08 L1160.1,418.57 L1161.1,417.1 L1162.1,415.68 L1163.1,414.3 L1164.1,412.96 L1165.1,411.66 L1166.1,410.4 L1167.1,409.17 L1168.1,407.98 L1169.1,406.83 L1170.1,405.72 L1171.1,404.63 L1172.1,403.58 L1173.1,402.56 L1174.1,401.57 L1175.1,400.61 L1176.1,399.67 L1177.1,398.76 L1178.1,397.88 L1179.1,397.02 L1180.1,396.19 L1181.1,395.38 L1182.1,394.59 L1183.1,393.83 L1184.1,393.09 L1185.1,392.37 L1186.1,391.67 L1187.1,390.99 L1188.1,390.33 L1189.1,389.69 L1190.1,389.07 L1191.1,388.47 L1192.1,387.89 L1193.1,387.33 L1194.1,386.8 L1195.1,386.28 L1196.1,385.79 L1197.1,385.32 L1198.1,384.87 L1199.1,384.45 L1200.1,384.06 L1201.1,383.7 L1202.1,383.36 L1202.5,383.23 M1203,589.5 L1204,586.37 L1205,583.17 L1206,579.89 L1207,576.56 L1208,573.18 L1209,569.75 L1210,566.28 L1211,562.77 L1212,559.24 L1213,555.69 L1214,552.12 L1215,548.54 L1216,544.96 L1217,541.37 L1218,537.79 L1219,534.21 L1220,530.65 L1221,527.1 L1222,523.57 L1223,520.07 L1224,516.59 L1225,513.14 L1226,509.73 L1227,506.34 L1228,503 L1229,499.7 L1230,496.43 L1231,493.22 L1232,490.05 L1233,486.92 L1234,483.85 L1235,480.82 L1236,477.85 L1237,474.93 L1238,472.07 L1239,469.26 L1240,466.51 L1241,463.81 L1242,461.17 L1243,458.59 L1244,456.06 L1245,453.59 L1246,451.18 L1247,448.83 L1248,446.53 L1249,444.29 L1250,442.11 L1251,439.98 L1252,437.91 L1253,435.89 L1254,433.93 L1255,432.02 L1256,430.16 L1257,428.36 L1258,426.61 L1259,424.9 L1260,423.25 L1261,421.64 L1262,420.08 L1263,418.57 L1264,417.1 L1265,415.68 L1266,414.3 L1267,412.96 L1268,411.66 L1269,410.4 L1270,409.17 L1271,407.98 L1272,406.83 L1273,405.72 L1274,404.63 L1275,403.58 L1276,402.56 L1277,401.57 L1278,400.61 L1279,399.67 L1280,398.76 L1281,397.88 L1282,397.02 L1283,396.19 L1284,395.38 L1285,394.59 L1286,393.83 L1287,393.09 L1288,392.37 L1289,391.67 L1290,390.99 L1291,390.33 L1292,389.69 L1293,389.07 L1294,388.47 L1295,387.89 L1296,387.33 L1297,386.8 L1298,386.28 L1299,385.79 L1300,385.32 L1301,384.87 L1302,384.45 L1303,384.06 L1304,383.7" fill="none" stroke="#00ff00" stroke-width="3" stroke-linejoin="round" shape-rendering="crispEdges"/><rect x="71" y="222" width="2" height="369" fill="#00ff00"/><rect x="172" y="222" width="3" height="369" fill="#00ff00"/><rect x="173" y="591" width="2" height="1" fill="#00ff00"/><rect x="275" y="222" width="3" height="369" fill="#00ff00"/><rect x="276" y="591" width="2" height="1" fill="#00ff00"/><rect x="378" y="222" width="3" height="369" fill="#00ff00"/><rect x="379" y="591" width="2" height="1" fill="#00ff00"/><rect x="481" y="222" width="3" height="369" fill="#00ff00"/><rect x="482" y="591" width="2" height="1" fill="#00ff00"/><rect x="584" y="222" width="3" height="369" fill="#00ff00"/><rect x="585" y="591" width="2" height="1" fill="#00ff00"/><rect x="686" y="222" width="3" height="185" fill="#00ff00"/><rect x="687" y="407" width="3" height="184" fill="#00ff00"/><rect x="688" y="591" width="2" height="1" fill="#00ff00"/><rect x="789" y="222" width="3" height="369" fill="#00ff00"/><rect x="790" y="591" width="2" height="1" fill="#00ff00"/><rect x="892" y="222" width="3" height="369" fill="#00ff00"/><rect x="893" y="591" width="2" height="1" fill="#00ff00"/><rect x="995" y="222" width="3" height="369" fill="#00ff00"/><rect x="996" y="591" width="2" height="1" fill="#00ff00"/><rect x="1098" y="222" width="3" height="369" fill="#00ff00"/><rect x="1099" y="591" width="2" height="1" fill="#00ff00"/><rect x="1201" y="222" width="3" height="369" fill="#00ff00"/><rect x="1200" y="289" width="1" height="296" fill="#00ff00"/><rect x="1202" y="591" width="2" height="1" fill="#00ff00"/><rect x="1303" y="355" width="2" height="30" fill="#00ff00"/><path d="M74.5,571.5 L77.5,565.5 L80.5,571.5 Z" fill="none" stroke="#fff" stroke-width="1" shape-rendering="crispEdges"/><path d="M74.5,571.5 L76.0,568.5" fill="none" stroke="#ff00ff" stroke-width="1" shape-rendering="crispEdges"/><path d="M134.5,414.5 L137.5,408.5 L140.5,414.5 Z" fill="none" stroke="#fff" stroke-width="1" shape-rendering="crispEdges"/><path d="M134.5,414.5 L136.0,411.5" fill="none" stroke="#ff00ff" stroke-width="1" shape-rendering="crispEdges"/><path d="M194.5,512.5 L197.5,506.5 L200.5,512.5 Z" fill="none" stroke="#fff" stroke-width="1" shape-rendering="crispEdges"/><path d="M194.5,512.5 L196.0,509.5" fill="none" stroke="#ff00ff" stroke-width="1" shape-rendering="crispEdges"/><path d="M254.5,397.5 L257.5,391.5 L260.5,397.5 Z" fill="none" stroke="#fff" stroke-width="1" shape-rendering="crispEdges"/><path d="M254.5,397.5 L256.0,394.5" fill="none" stroke="#ff00ff" stroke-width="1" shape-rendering="crispEdges"/><path d="M314.5,459.5 L317.5,453.5 L320.5,459.5 Z" fill="none" stroke="#fff" stroke-width="1" shape-rendering="crispEdges"/><path d="M314.5,459.5 L316.0,456.5" fill="none" stroke="#ff00ff" stroke-width="1" shape-rendering="crispEdges"/><path d="M374.5,386.5 L377.5,380.5 L380.5,386.5 Z" fill="none" stroke="#fff" stroke-width="1" shape-rendering="crispEdges"/><path d="M374.5,386.5 L376.0,383.5" fill="none" stroke="#ff00ff" stroke-width="1" shape-rendering="crispEdges"/><path d="M434.5,425.5 L437.5,419.5 L440.5,425.5 Z" fill="none" stroke="#fff" stroke-width="1" shape-rendering="crispEdges"/><path d="M434.5,425.5 L436.0,422.5" fill="none" stroke="#ff00ff" stroke-width="1" shape-rendering="crispEdges"/><path d="M494.5,542.5 L497.5,536.5 L500.5,542.5 Z" fill="none" stroke="#fff" stroke-width="1" shape-rendering="crispEdges"/><path d="M494.5,542.5 L496.0,539.5" fill="none" stroke="#ff00ff" stroke-width="1" shape-rendering="crispEdges"/><path d="M554.5,404.5 L557.5,398.5 L560.5,404.5 Z" fill="none" stroke="#fff" stroke-width="1" shape-rendering="crispEdges"/><path d="M554.5,404.5 L556.0,401.5" fill="none" stroke="#ff00ff" stroke-width="1" shape-rendering="crispEdges"/><path d="M614.5,483.5 L617.5,477.5 L620.5,483.5 Z" fill="none" stroke="#fff" stroke-width="1" shape-rendering="crispEdges"/><path d="M614.5,483.5 L616.0,480.5" fill="none" stroke="#ff00ff" stroke-width="1" shape-rendering="crispEdges"/><path d="M674.5,391.5 L677.5,385.5 L680.5,391.5 Z" fill="none" stroke="#fff" stroke-width="1" shape-rendering="crispEdges"/><path d="M674.5,391.5 L676.0,388.5" fill="none" stroke="#ff00ff" stroke-width="1" shape-rendering="crispEdges"/><path d="M734.5,439.5 L737.5,433.5 L740.5,439.5 Z" fill="none" stroke="#fff" stroke-width="1" shape-rendering="crispEdges"/><path d="M734.5,439.5 L736.0,436.5" fill="none" stroke="#ff00ff" stroke-width="1" shape-rendering="crispEdges"/><path d="M794.5,570.5 L797.5,564.5 L800.5,570.5 Z" fill="none" stroke="#fff" stroke-width="1" shape-rendering="crispEdges"/><path d="M794.5,570.5 L796.0,567.5" fill="none" stroke="#ff00ff" stroke-width="1" shape-rendering="crispEdges"/><path d="M854.5,413.5 L857.5,407.5 L860.5,413.5 Z" fill="none" stroke="#fff" stroke-width="1" shape-rendering="crispEdges"/><path d="M854.5,413.5 L856.0,410.5" fill="none" stroke="#ff00ff" stroke-width="1" shape-rendering="crispEdges"/><path d="M914.5,509.5 L917.5,503.5 L920.5,509.5 Z" fill="none" stroke="#fff" stroke-width="1" shape-rendering="crispEdges"/><path d="M914.5,509.5 L916.0,506.5" fill="none" stroke="#ff00ff" stroke-width="1" shape-rendering="crispEdges"/><path d="M974.5,397.5 L977.5,391.5 L980.5,397.5 Z" fill="none" stroke="#fff" stroke-width="1" shape-rendering="crispEdges"/><path d="M974.5,397.5 L976.0,394.5" fill="none" stroke="#ff00ff" stroke-width="1" shape-rendering="crispEdges"/><path d="M1034.5,457.5 L1037.5,451.5 L1040.5,457.5 Z" fill="none" stroke="#fff" stroke-width="1" shape-rendering="crispEdges"/><path d="M1034.5,457.5 L1036.0,454.5" fill="none" stroke="#ff00ff" stroke-width="1" shape-rendering="crispEdges"/><path d="M1094.5,386.5 L1097.5,380.5 L1100.5,386.5 Z" fill="none" stroke="#fff" stroke-width="1" shape-rendering="crispEdges"/><path d="M1094.5,386.5 L1096.0,383.5" fill="none" stroke="#ff00ff" stroke-width="1" shape-rendering="crispEdges"/><path d="M1154.5,424.5 L1157.5,418.5 L1160.5,424.5 Z" fill="none" stroke="#fff" stroke-width="1" shape-rendering="crispEdges"/><path d="M1154.5,424.5 L1156.0,421.5" fill="none" stroke="#ff00ff" stroke-width="1" shape-rendering="crispEdges"/><path d="M1214.5,537.5 L1217.5,531.5 L1220.5,537.5 Z" fill="none" stroke="#fff" stroke-width="1" shape-rendering="crispEdges"/><path d="M1214.5,537.5 L1216.0,534.5" fill="none" stroke="#ff00ff" stroke-width="1" shape-rendering="crispEdges"/><path d="M1274.5,405.5 L1277.5,399.5 L1280.5,405.5 Z" fill="none" stroke="#fff" stroke-width="1" shape-rendering="crispEdges"/><path d="M1274.5,405.5 L1276.0,402.5" fill="none" stroke="#ff00ff" stroke-width="1" shape-rendering="crispEdges"/><text transform="translate(63,136) scale(1,1.1)" text-anchor="end" font-size="12" fill="#fff">40.0m</text><text transform="translate(63,225) scale(1,1.1)" text-anchor="end" font-size="12" fill="#fff">30.0m</text><text transform="translate(63,314) scale(1,1.1)" text-anchor="end" font-size="12" fill="#fff">20.0m</text><text transform="translate(63,402) scale(1,1.1)" text-anchor="end" font-size="12" fill="#fff">10.0m</text><text transform="translate(63,491) scale(1,1.1)" text-anchor="end" font-size="12" fill="#fff">0</text><text transform="translate(63,579) scale(1,1.1)" text-anchor="end" font-size="12" fill="#fff">-10.0m</text><text transform="translate(63,668) scale(1,1.1)" text-anchor="end" font-size="12" fill="#fff">-20.0m</text><text transform="translate(1312.5,136) scale(1,1.1)" font-size="12" fill="#fff">15.0</text><text transform="translate(1312.5,225) scale(1,1.1)" font-size="12" fill="#fff">10.0</text><text transform="translate(1312.5,314) scale(1,1.1)" font-size="12" fill="#fff">5.0</text><text transform="translate(1312.5,402) scale(1,1.1)" font-size="12" fill="#fff">0</text><text transform="translate(1312.5,491) scale(1,1.1)" font-size="12" fill="#fff">-5.0</text><text transform="translate(1312.5,579) scale(1,1.1)" font-size="12" fill="#fff">-10.0</text><text transform="translate(1312.5,668) scale(1,1.1)" font-size="12" fill="#fff">-15.0</text><text transform="translate(71.5,684) scale(1,1.1)" text-anchor="middle" font-size="12" fill="#fff">1.2m</text><text transform="translate(317.5,684) scale(1,1.1)" text-anchor="middle" font-size="12" fill="#fff">1.3m</text><text transform="translate(564.5,684) scale(1,1.1)" text-anchor="middle" font-size="12" fill="#fff">1.3m</text><text transform="translate(811.5,684) scale(1,1.1)" text-anchor="middle" font-size="12" fill="#fff">1.4m</text><text transform="translate(1058.5,684) scale(1,1.1)" text-anchor="middle" font-size="12" fill="#fff">1.4m</text><text transform="translate(1304.5,684) scale(1,1.1)" text-anchor="middle" font-size="12" fill="#fff">1.5m</text><text x="682.5" y="118" text-anchor="middle" font-size="21" fill="#fff">Circuit3 Ким</text><text x="687.5" y="707" text-anchor="middle" font-size="15" fill="#fff">Time (S)</text><text transform="translate(19.5,397) rotate(-90)" text-anchor="middle" font-size="16" fill="#fff">Channel_A Voltage(V)</text><text transform="translate(1347,397.5) rotate(90)" text-anchor="middle" font-size="16" fill="#fff">Channel_B Voltage(V)</text></svg>
<svg class="abs" style="left:0;top:414px" width="8" height="14" viewBox="0 414 8 14"><path d="M0,416.5 L5,421.5 L0,426.5 Z" fill="#ff0000"/></svg>

<!-- status bar -->
<div class="abs" style="left:0;top:715px;width:1366px;height:13px;background:#f0f0f0"></div>
<div class="abs" style="left:2px;top:715px;width:1364px;height:3px;background:#fbfbfb"></div>
<div class="abs" style="left:0;top:718px;width:1351px;height:1px;background:#a0a0a0"></div>
<div class="abs" style="left:1354px;top:718px;width:12px;height:1px;background:#a0a0a0"></div>
<div class="abs" style="left:1354px;top:718px;width:1px;height:20px;background:#a0a0a0"></div>
<span class="abs" style="left:2px;top:720px;font-size:12px;letter-spacing:-0.22px;color:#000;line-height:14px">Selected Trace:Channel A</span>

<!-- taskbar -->
<div class="abs" style="left:0;top:728px;width:1366px;height:8px;background:rgba(14,70,175,0.62)"></div>
<div class="abs" style="left:0;top:736px;width:1366px;height:8px;background:#0450cc"></div>
<div class="abs" style="left:0;top:744px;width:1366px;height:24px;background:linear-gradient(#0a3174,#05286a)"></div>
<!--TASKBAR-->
<svg class="abs" style="left:0;top:728px" width="1366" height="40" viewBox="0 728 1366 40">
<defs>
<linearGradient id="gearbg" x1="0" y1="0" x2="0" y2="1"><stop offset="0" stop-color="#2aa0e0"/><stop offset="1" stop-color="#0a5aa8"/></linearGradient>
<radialGradient id="pwrbg" cx="0.5" cy="0.45" r="0.6"><stop offset="0" stop-color="#c80000"/><stop offset="1" stop-color="#800000"/></radialGradient>
<linearGradient id="folder" x1="0" y1="0" x2="0" y2="1"><stop offset="0" stop-color="#fdf0b8"/><stop offset="1" stop-color="#f0cc60"/></linearGradient>
<linearGradient id="shelf" x1="0" y1="0" x2="0" y2="1"><stop offset="0" stop-color="#b8e4f8"/><stop offset="1" stop-color="#5aa8d8"/></linearGradient>
<linearGradient id="opbtn" x1="0" y1="0" x2="1" y2="0"><stop offset="0" stop-color="#b04448"/><stop offset="0.5" stop-color="#d04c50"/><stop offset="1" stop-color="#d85050"/></linearGradient>
<linearGradient id="opera" x1="0" y1="0" x2="1" y2="1"><stop offset="0" stop-color="#ff2a3a"/><stop offset="1" stop-color="#b0101c"/></linearGradient>
</defs>
<!-- running buttons -->
<rect x="300.5" y="729.5" width="57" height="37" fill="url(#opbtn)" stroke="#f49090"/>
<rect x="424.5" y="729.5" width="57" height="37" fill="rgba(255,255,255,0.16)" stroke="rgba(255,255,255,0.42)"/>
<rect x="486.5" y="729.5" width="57" height="37" fill="rgba(255,255,255,0.16)" stroke="rgba(255,255,255,0.42)"/>
<rect x="548.5" y="729.5" width="57" height="37" fill="rgba(255,255,255,0.16)" stroke="rgba(255,255,255,0.42)"/>
<rect x="610.5" y="729.5" width="57" height="37" fill="rgba(255,255,255,0.16)" stroke="rgba(255,255,255,0.42)"/>
<rect x="672.5" y="729.5" width="57" height="37" fill="rgba(255,255,255,0.30)" stroke="rgba(255,255,255,0.85)"/>
<!-- start logo -->
<path d="M12,737.5 L23,736.2 V746.8 H12 Z M12,748.2 H23 V758.4 L12,757 Z M24,736 L38,734.5 V746.8 H24 Z M24,748.2 H38 V760 L24,758.5 Z" fill="#fff"/>
<!-- explorer -->
<path d="M66,737 H73 L75,739 H82 L84,741 H96 V762 H66 Z" fill="#e8c060"/>
<rect x="67" y="741" width="29" height="21" fill="url(#folder)"/>
<rect x="68" y="736" width="3" height="2" fill="#20c020"/><rect x="76" y="738" width="3" height="2" fill="#e03020"/><rect x="85" y="740" width="3" height="2" fill="#2090e0"/>
<path d="M69,752 Q69,750 71,750 H91 Q93,750 93,752 V763 H87 V757 H75 V763 H69 Z" fill="url(#shelf)" stroke="#6ab0e0" stroke-width="0.6"/>
<!-- gear app -->
<rect x="128.5" y="733.5" width="29" height="29" rx="6" fill="#3a3a3a"/>
<rect x="130.5" y="735.5" width="25" height="25" rx="4.5" fill="url(#gearbg)"/>
<rect x="134" y="739" width="11" height="14" fill="none" stroke="#fff" stroke-width="1.2"/>
<path d="M136,742 H143 M136,745 H143 M136,748 H141" stroke="#fff" stroke-width="1"/>
<circle cx="147.5" cy="751.5" r="5" fill="#fff"/><circle cx="147.5" cy="751.5" r="2" fill="#1a7ac0"/>
<path d="M147.5,744.5 V758.5 M140.5,751.5 H154.5 M142.5,746.5 L152.5,756.5 M152.5,746.5 L142.5,756.5" stroke="#fff" stroke-width="2"/>
<circle cx="147.5" cy="751.5" r="2" fill="#1a7ac0"/>
<!-- power -->
<rect x="190.5" y="733.5" width="29" height="29" rx="6" fill="#505050"/>
<rect x="192.5" y="735.5" width="25" height="25" rx="4.5" fill="url(#pwrbg)"/>
<path d="M201,742.5 A7,7 0 1 0 208,742.5" fill="none" stroke="#fff" stroke-width="1.8"/>
<path d="M204.5,739 V747.5" stroke="#fff" stroke-width="1.8"/>
<!-- chrome -->
<circle cx="267" cy="748" r="15" fill="#db4437"/>
<path d="M267,748 L254.0,755.5 A15,15 0 0 1 254.0,740.5 Z" fill="#0f9d58"/>
<path d="M267,748 L254.0,740.5 A15,15 0 0 1 267,733 Z" fill="#db4437"/>
<path d="M267,748 L280,740.5 A15,15 0 0 1 267,763 Z" fill="#f4c20d"/>
<path d="M267,748 L267,763 A15,15 0 0 1 254,755.5 Z" fill="#0f9d58"/>
<circle cx="267" cy="748" r="7" fill="#fff"/><circle cx="267" cy="748" r="5.6" fill="#4285f4"/>
<!-- opera -->
<ellipse cx="329" cy="748" rx="15" ry="15" fill="url(#opera)"/>
<ellipse cx="330" cy="748" rx="5.5" ry="10.5" fill="#cc4a4e"/>
<!-- V -->
<path d="M390.7,732 L398.2,739.5 L390.7,747 L383.2,739.5 Z" fill="#3aa0e8"/>
<rect x="391" y="740" width="15" height="14" fill="#2878d0"/>
<circle cx="391" cy="755" r="6" fill="#1a4c9a"/>
<rect x="375" y="740" width="15" height="15" fill="#2456b8"/>
<path d="M378.5,743.5 L382.5,752 L386.5,743.5" fill="none" stroke="#fff" stroke-width="2"/>
<!-- utorrent -->
<circle cx="453" cy="748" r="16" fill="#76b83f"/>
<path d="M443.8,742.5 L450.8,762.5" fill="none" stroke="#fff" stroke-width="4.2"/><path d="M447.5,753 Q451,756.5 456,754 L460.5,740" fill="none" stroke="#fff" stroke-width="3.6"/><path d="M457,753 Q461,754 467,750.5" fill="none" stroke="#fff" stroke-width="2.6"/>
<!-- discord -->
<rect x="502.5" y="735.5" width="25" height="23" rx="4" fill="#6f82d2"/>
<path d="M519,757 L527.5,761.5 V753 Z" fill="#6f82d2"/>
<path d="M505.5,751 Q506,743 509.5,741.5 L511.5,742.5 H518.5 L520.5,741.5 Q524,743 524.5,751 Q522,753.5 519.5,753.5 L518.5,751.5 H511.5 L510.5,753.5 Q508,753.5 505.5,751 Z" fill="#fff"/>
<ellipse cx="511.5" cy="747.5" rx="1.8" ry="2" fill="#6f82d2"/><ellipse cx="518.5" cy="747.5" rx="1.8" ry="2" fill="#6f82d2"/>
<!-- word -->
<path d="M562,760 V738 Q563,733 568,733 H586 V759 Z" fill="#2a5ab8"/>
<path d="M566,735 H590 L591,761 L567,762 Z" fill="#f0f4fa" stroke="#c0d0e8" stroke-width="0.6"/>
<path d="M572,740 L573.5,747 L575,742 L576.5,747 L578,740" fill="none" stroke="#1a3a98" stroke-width="1.6"/>
<path d="M580,740.5 H588 M580,743 H588 M580,745.5 H588 M572,750 H588 M572,753 H588 M572,756 H588" stroke="#2040a8" stroke-width="1.2"/>
<!-- red app -->
<rect x="624" y="733" width="30" height="30" fill="#d84a1b"/>
<path d="M632.5,741 L636,740 V751 L638.5,753 V736.5 L642.5,739 V755.5 L644,756 V744.5 L648,744 V758 H640 Q636,757 633,754 L632.5,753 Z" fill="#fff"/>
<!-- multisim -->
<path d="M685.1,747.6 L698.4,737.1 L716.7,742.5 L700.7,757.4 Z" fill="#1e2e9e"/>
<path d="M697.5,738.6 L709,741.5 M695.6,740.7 L703.4,743.5 M691.5,742.4 L702.8,746.9 M690.6,751.5 L696.4,747.2 M694.2,753.7 L698.5,750.6 M697.4,756.4 L704.6,750.8" stroke="#fff" stroke-width="1.3"/>
<path d="M688.6,745 L692.5,746.6 M686.3,746.5 L690,748.7 M709.5,743.6 L714.5,745 M707.5,747 L711.5,748.8" stroke="#f8a818" stroke-width="1.4"/>
<!-- tray -->
<path d="M1179,751.5 L1182.5,747 L1186.3,751.5 Z" fill="#fff"/>
<rect x="1199.5" y="751.5" width="3" height="2.5" fill="#fff" stroke="#000" stroke-width="0.6"/>
<rect x="1203.5" y="749.5" width="3" height="4.5" fill="#fff" stroke="#000" stroke-width="0.6"/>
<rect x="1207.5" y="746.5" width="3" height="7.5" fill="#9a9590" stroke="#000" stroke-width="0.6"/>
<rect x="1211.5" y="743.5" width="3" height="10.5" fill="#9a9590" stroke="#000" stroke-width="0.6"/>
<path d="M1224,746 H1227 L1231,742 V755.5 L1227,751.5 H1224 Z" fill="#fff" stroke="#222" stroke-width="0.5"/>
<path d="M1232.5,746.5 Q1234,748.7 1232.5,751 M1234.5,744.5 Q1237.5,748.7 1234.5,753" fill="none" stroke="#fff" stroke-width="1.2"/>
<rect x="1354" y="728" width="1" height="8" fill="rgba(40,60,100,0.6)"/>
</svg>
<span class="tray" style="left:1254px;top:742px;letter-spacing:-0.8px">РУС</span>
<span class="tray" style="left:1310px;top:734px;letter-spacing:-0.6px">1:54</span>
<span class="tray" style="left:1293px;top:751px;letter-spacing:-0.7px">29.01.2021</span>

</body></html>
